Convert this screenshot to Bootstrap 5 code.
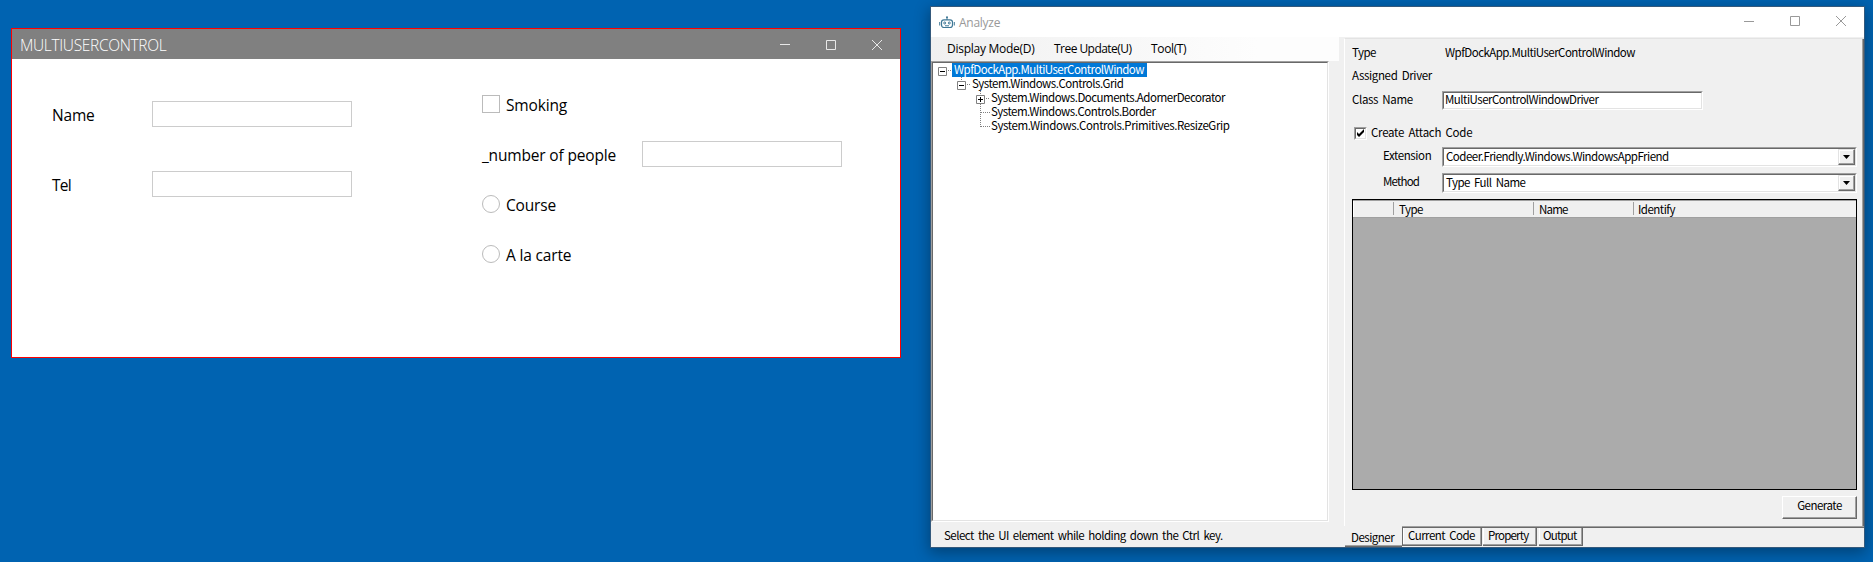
<!DOCTYPE html>
<html lang="en">
<head>
<meta charset="utf-8">
<title>Analyze</title>
<link href="https://cdn.jsdelivr.net/npm/bootstrap@5.3.0/dist/css/bootstrap.min.css" rel="stylesheet">
<style>
html,body{height:100%}
body{margin:0;background:#0063b1;color:#000;overflow:hidden;position:relative}
.win{position:absolute}
.caps{gap:36px}
svg{display:block}
/* letter-spacing steps */
.k26{letter-spacing:-.26px}.k35{letter-spacing:-.35px}.k42{letter-spacing:-.4px}.k56{letter-spacing:-.54px}.k80{letter-spacing:-.8px}
.ws{word-spacing:2px}
/* WPF window */
.wpf{left:11px;top:28px;width:890px;height:330px;border:1px solid #f00;background:#fff;font:15.5px/20px "Open Sans",sans-serif;letter-spacing:-.17px}
.wpf-bar{height:30px;background:gray;color:#fff;font-weight:300;letter-spacing:-.33px;padding:1px 18px 0 8px}
.wpf-left{width:470px;padding:42px 0 0 40px}
.wpf-right{padding-top:36px}
.field{width:200px;height:26px;border:1px solid #ccc;background:#fff}
.lbl{width:100px}
.line-a{height:26px;margin-bottom:44px}
.line-a span{padding-top:2px}
.opt{height:18px}
.opt+.opt{margin-top:32px}
.num{height:26px;margin:28px 0}
.opt span,.num span{padding-top:2px}
.tick{width:18px;height:18px;border:1px solid #bbb;margin-right:6px}
.num-lbl{width:160px}
/* WinForms window */
.forms{left:931px;top:7px;width:933px;height:540px;background:#f0f0f0;font:11.5px/14px "Noto Sans CJK JP",sans-serif;letter-spacing:-.51px;box-shadow:0 0 0 1px #34597c,0 4px 14px 2px rgba(0,0,0,.33);white-space:nowrap}
.forms-bar{height:30px;background:#fff;color:#999;font:12px/15px "Open Sans",sans-serif;letter-spacing:-.26px;padding:0 18px 0 8px}
.forms-bar .caps{padding-bottom:2px}
.pane-l{width:408px}
.menu-strip{height:24px;background:linear-gradient(90deg,#f0f0f0,#fdfdfd 80%);font:12px/24px "Open Sans",sans-serif;padding-left:16px}
.m1{width:107px}.m2{width:97px}
.sunken{border:1px solid;border-color:#a0a0a0 #fff #fff #a0a0a0;background:#fff}
.sunken>.in{border:1px solid;border-color:#696969 #e3e3e3 #e3e3e3 #696969;height:100%}
.tree{width:398px;height:461px}
.tree-body{position:relative}
.node{height:14px;line-height:12px;padding-left:57px}
.node.l0{padding-left:19px}.node.l1{padding-left:38px}
.node span{padding-left:1px;height:14px;display:inline-block}
.node .sel{background:#0078d7;color:#fff;width:195px;padding-left:2px}
.tree-lines{position:absolute;left:0;top:0}
.hint{padding:6px 0 0 13px}
.splitter{width:5px}
.panel-r{width:520px;margin-top:1px}
.designer{height:488px;border:1px solid;border-width:1px 0 0 1px;border-color:#e3e3e3 #696969 #fff #fff;box-shadow:inset -1px 0 #696969,inset -2px 0 #a0a0a0;padding:6px 7px 0}
.row-type span:first-child{width:93px}
.row-drv{padding-top:9px}
.row-cls{margin-top:9px;height:19px}
.row-cls>span{width:90px;padding-top:1px}
.cls-box{width:261px;height:19px}
.cls-box .in{padding-left:1px;line-height:12px}
.row-chk{margin-top:17px;height:13px;padding-left:2px}
.chk{width:13px;height:13px}
.row-chk span{margin:-2px 0 0 4px}
.row-combo{padding-left:31px;margin-top:6px}
.row-chk+.row-combo{margin-top:7px}
.row-combo>span{width:59px;padding-top:1px}
.combo{width:415px;height:20px}
.combo .in{display:flex;justify-content:space-between;padding-left:2px}
.arrow{width:17px;height:16px;background:#f0f0f0;border:1px solid;border-color:#e3e3e3 #696969 #696969 #e3e3e3;box-shadow:inset -1px -1px #a0a0a0,inset 1px 1px #fff;display:grid;place-items:center}
.sheet{width:505px;height:291px;border:1px solid #000;background:#ababab;margin-top:6px}
.sheet-head{height:18px;background:#f0f0f0;border:solid #a0a0a0;border-width:1px 0 1px;line-height:14px;box-shadow:inset 1px 0 #fff}
.sheet-head div{padding-left:5px;height:13px;border-left:1px solid #a0a0a0;margin-top:1px}
.sheet-head .c-mark{width:40px;border:0}.sheet-head .c-type{width:140px}.sheet-head .c-name{width:100px}.sheet-head .c-ident{padding-left:4px}
.gen{width:75px;height:23px;border:1px solid;border-color:#fff #696969 #696969 #fff;box-shadow:inset -1px -1px #a0a0a0;background:#f0f0f0;margin:6px 0 0 430px;line-height:17px;text-align:center}
.tabs{height:21px}
.tab-on{width:57px;height:21px;border-bottom:1px solid #696969;box-shadow:inset 0 -1px #a0a0a0;padding:4px 0 0 6px;margin-left:1px}
.tab-rest{border-top:1px solid #a0a0a0;box-shadow:inset 0 1px #696969;padding-top:1px}
.tab{height:18px;border:solid #696969;border-width:0 1px 1px 0;box-shadow:inset -1px -1px #a0a0a0,inset 1px 0 #fff;line-height:14px;padding-left:5px}
.t1{width:80px;border-left-width:1px}.t2{width:54px;margin-left:1px}.t3{width:44px;margin-left:2px;padding-left:4px}
</style>
</head>
<body>
<section class="win wpf">
  <header class="wpf-bar d-flex align-items-center justify-content-between">
    <span>MULTIUSERCONTROL</span>
    <div class="d-flex caps">
      <svg width="10" height="10" stroke="#e8e8e8"><path d="M0 4.500h10"/></svg>
      <svg width="10" height="10" stroke="#e8e8e8" fill="none"><path d="M.5.5h9v9h-9z"/></svg>
      <svg width="10" height="10" stroke="#e8e8e8"><path d="M0 0l10 10M10 0L0 10"/></svg>
    </div>
  </header>
  <div class="d-flex">
    <div class="wpf-left">
      <div class="line-a d-flex align-items-center"><span class="lbl">Name</span><div class="field"></div></div>
      <div class="line-a d-flex align-items-center"><span class="lbl k80">Tel</span><div class="field"></div></div>
    </div>
    <div class="wpf-right">
      <div class="opt d-flex align-items-center"><div class="tick"></div><span>Smoking</span></div>
      <div class="num d-flex align-items-center"><span class="num-lbl">_number of people</span><div class="field"></div></div>
      <div class="opt d-flex align-items-center"><div class="tick rounded-circle"></div><span>Course</span></div>
      <div class="opt d-flex align-items-center"><div class="tick rounded-circle"></div><span>A la carte</span></div>
    </div>
  </div>
</section>

<section class="win forms">
  <header class="forms-bar d-flex align-items-center justify-content-between">
    <div class="d-flex align-items-center">
      <svg width="16" height="13" fill="none" stroke="#3f7896" class="me-1"><path d="M8 1v3"/><circle cx="8" cy="1.200" r="1" fill="#3f7896" stroke="none"/><rect x="2.500" y="3.800" width="11" height="7.700" rx="2.500" stroke-width="1.200"/><path d="M.7 6v3.500M15.300 6v3.500M6 9.800h4"/><circle cx="5.700" cy="7" r="1"/><circle cx="10.300" cy="7" r="1"/></svg>
      <span>Analyze</span>
    </div>
    <div class="d-flex caps">
      <svg width="10" height="10" stroke="#999"><path d="M0 5.500h10"/></svg>
      <svg width="10" height="10" stroke="#999" fill="none"><path d="M.5.5h9v9h-9z"/></svg>
      <svg width="10" height="10" stroke="#999"><path d="M0 0l10 10M10 0L0 10"/></svg>
    </div>
  </header>
  <div class="d-flex">
    <div class="pane-l">
      <nav class="menu-strip d-flex"><span class="m1 k26">Display Mode(D)</span><span class="m2 k56">Tree Update(U)</span><span class="k35">Tool(T)</span></nav>
      <div class="sunken tree"><div class="in tree-body">
        <svg class="tree-lines" width="60" height="70" fill="none">
          <g stroke="#808080" stroke-dasharray="1 1"><path d="M15 7.500h4M34 21.500h4M53 35.500h4M28.500 14v4M47.500 28v4M47.500 41v23M48 49.500h9M48 63.500h9"/></g>
          <g stroke="#808080" fill="#fff"><path d="M5.500 4.500h8v8h-8zM24.500 18.500h8v8h-8zM43.500 32.500h8v8h-8z"/></g>
          <path stroke="#000" d="M7 8.500h5M26 22.500h5M45 36.500h5M47.500 34v5"/>
        </svg>
        <div class="node l0"><span class="sel k56">WpfDockApp.MultiUserControlWindow</span></div>
        <div class="node l1"><span>System.Windows.Controls.Grid</span></div>
        <div class="node"><span>System.Windows.Documents.AdornerDecorator</span></div>
        <div class="node"><span>System.Windows.Controls.Border</span></div>
        <div class="node"><span class="k42">System.Windows.Controls.Primitives.ResizeGrip</span></div>
      </div></div>
      <div class="hint ws">Select the UI element while holding down the Ctrl key.</div>
    </div>
    <div class="splitter"></div>
    <div class="panel-r">
      <div class="designer">
        <div class="row-type d-flex"><span>Type</span><span class="k56">WpfDockApp.MultiUserControlWindow</span></div>
        <div class="row-drv ws k35">Assigned Driver</div>
        <div class="row-cls d-flex"><span class="ws k35">Class Name</span>
          <div class="sunken cls-box"><div class="in">MultiUserControlWindowDriver</div></div></div>
        <div class="row-chk d-flex">
          <div class="sunken chk"><div class="in"><svg width="9" height="9"><path d="M1 3l2 2 5-5v3L3 8 1 6z"/></svg></div></div>
          <span class="ws k26">Create Attach Code</span></div>
        <div class="row-combo d-flex"><span class="k42">Extension</span>
          <div class="sunken combo"><div class="in"><span>Codeer.Friendly.Windows.WindowsAppFriend</span><div class="arrow"><svg width="7" height="4"><path d="M0 0h7L3.500 4z"/></svg></div></div></div></div>
        <div class="row-combo d-flex"><span class="k80">Method</span>
          <div class="sunken combo"><div class="in"><span class="ws">Type Full Name</span><div class="arrow"><svg width="7" height="4"><path d="M0 0h7L3.500 4z"/></svg></div></div></div></div>
        <div class="sheet"><div class="sheet-head d-flex"><div class="c-mark"></div><div class="c-type">Type</div><div class="c-name k80">Name</div><div class="c-ident">Identify</div></div></div>
        <div class="gen">Generate</div>
      </div>
      <div class="tabs d-flex"><div class="tab-on">Designer</div>
        <div class="tab-rest d-flex flex-fill"><div class="tab t1 ws">Current Code</div><div class="tab t2 k80">Property</div><div class="tab t3 k80">Output</div></div></div>
    </div>
  </div>
</section>
<script src="https://cdn.jsdelivr.net/npm/bootstrap@5.3.0/dist/js/bootstrap.bundle.min.js"></script>
</body>
</html>
